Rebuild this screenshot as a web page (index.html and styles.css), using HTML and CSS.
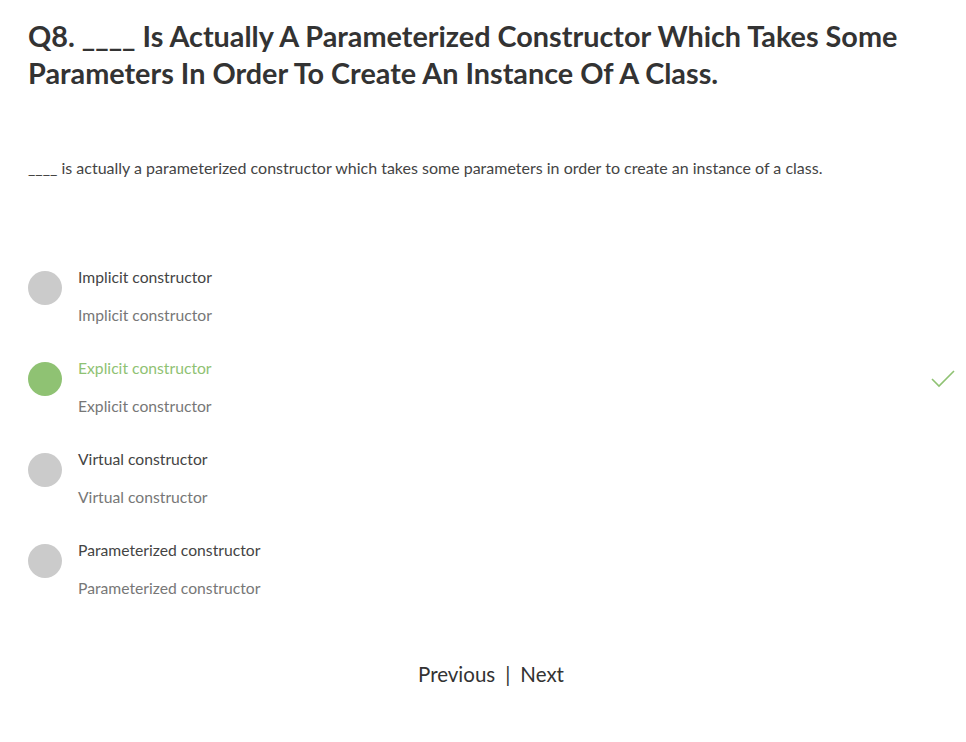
FILE: index.html
```html
<!DOCTYPE html>
<html lang="en">
<head>
<meta charset="utf-8">
<title>Q8</title>
<link rel="stylesheet" href="styles.css">
</head>
<body>
<main class="quiz">
  <h1 class="title">Q8. ____ Is Actually A Parameterized Constructor Which Takes Some Parameters In Order To Create An Instance Of A Class.</h1>
  <p class="desc">____ is actually a parameterized constructor which takes some parameters in order to create an instance of a class.</p>
  <ul class="options">
    <li class="option">
      <span class="dot"></span>
      <div class="texts"><div class="label">Implicit constructor</div><div class="sub">Implicit constructor</div></div>
    </li>
    <li class="option correct">
      <span class="dot"></span>
      <div class="texts"><div class="label">Explicit constructor</div><div class="sub">Explicit constructor</div></div>
      <svg class="check" width="26" height="18" viewBox="0 0 26 18"><path d="M2 9 L9 16 L24 1" fill="none" stroke="#8fc273" stroke-width="1.6"/></svg>
    </li>
    <li class="option">
      <span class="dot"></span>
      <div class="texts"><div class="label">Virtual constructor</div><div class="sub">Virtual constructor</div></div>
    </li>
    <li class="option">
      <span class="dot"></span>
      <div class="texts"><div class="label">Parameterized constructor</div><div class="sub">Parameterized constructor</div></div>
    </li>
  </ul>
  <nav class="pager"><a class="link">Previous</a><span class="sep">|</span><a class="link">Next</a></nav>
</main>
</body>
</html>
```

FILE: styles.css
```css
html, body { margin: 0; padding: 0; background: #fff; }
body { font-family: "Lato", "Noto Sans", sans-serif; color: #333; }
.quiz { padding: 18px 0 0 28px; width: 930px; }
.title { margin: 0; font-size: 28.8px; line-height: 37px; font-weight: 700; color: #333; width: 900px; }
.desc { margin: 66px 0 0; font-size: 16px; line-height: 20px; color: #444; }
.options { list-style: none; margin: 85px 0 0; padding: 0; }
.option { display: flex; align-items: flex-start; position: relative; height: 91px; }
.dot { width: 34px; height: 34px; border-radius: 50%; background: #cbcbcb; margin-top: 8px; flex: none; }
.texts { margin-left: 16px; margin-top: 4px; }
.label { font-size: 15.7px; line-height: 20px; color: #444; }
.sub { font-size: 15.7px; line-height: 20px; color: #777; margin-top: 18px; }
.correct .dot { background: #8fc273; }
.correct .label { color: #8fc273; }
.check { position: absolute; left: 902px; top: 16px; }
.pager { display: flex; justify-content: center; gap: 10px; font-size: 20.5px; color: #333; margin-top: 35px; width: 926px; }
```
